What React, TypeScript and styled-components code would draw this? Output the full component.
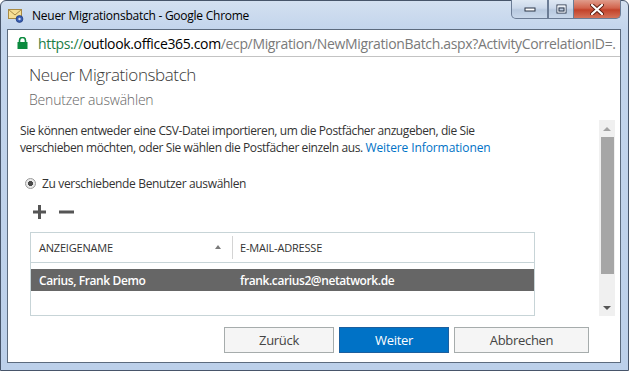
import styled, { createGlobalStyle } from 'styled-components'

const GlobalStyle = createGlobalStyle`
  html, body {
    margin: 0;
    padding: 0;
  }
  body {
    width: 629px;
    height: 371px;
    overflow: hidden;
    font-family: 'Segoe UI', 'Open Sans', sans-serif;
  }
`

const Window = styled.div`
  box-sizing: border-box;
  width: 629px;
  height: 371px;
  display: flex;
  flex-direction: column;
  padding: 0 7px 7px 6px;
  border: 1px solid #47556a;
  border-radius: 6px 6px 0 0;
  background: linear-gradient(180deg, #d3e0f0 0%, #c3d5ec 28px, #bcd0ea 100%);
`

const TitleBar = styled.div`
  height: 28px;
  display: flex;
  align-items: center;
  padding-left: 1px;
`

const TitleText = styled.span`
  margin-left: 8px;
  font-size: 12px;
  letter-spacing: -0.25px;
  color: #000;
  flex: 1;
`

const Controls = styled.div`
  align-self: flex-start;
  display: flex;
  margin-top: -1px;
  height: 19px;
`

const CtrlButton = styled.div<{ $width: number; $close?: boolean }>`
  box-sizing: border-box;
  width: ${(p) => p.$width}px;
  height: 19px;
  border: 1px solid #6b7c95;
  border-top: none;
  border-left-width: ${(p) => (p.$close ? 0 : 1)}px;
  display: flex;
  align-items: center;
  justify-content: center;
  background: ${(p) =>
    p.$close
      ? 'linear-gradient(180deg, #e09c8b 0%, #d2634c 45%, #c2422a 55%, #d5735a 100%)'
      : 'linear-gradient(180deg, #dfe8f3 0%, #cbd8ea 45%, #b8c9df 55%, #c8d7ea 100%)'};
  border-radius: ${(p) => (p.$close ? '0 0 5px 0' : '0')};
  &:first-child {
    border-radius: 0 0 0 5px;
  }
`

const Client = styled.div`
  flex: 1;
  display: flex;
  flex-direction: column;
  border: 1px solid #5c6b7e;
  background: #fff;
  min-height: 0;
`

const AddressBar = styled.div`
  height: 26px;
  display: flex;
  align-items: center;
  padding-left: 9px;
  border-bottom: 1px solid #c3c3c3;
  white-space: nowrap;
  overflow: hidden;
`

const Url = styled.span`
  margin-left: 10px;
  font-size: 14px;
  letter-spacing: -0.35px;
  color: #7a7a7a;
  overflow: hidden;
`

const Scheme = styled.span`
  color: #1b7d46;
`

const Host = styled.span`
  color: #000;
`

const Page = styled.div`
  flex: 1;
  display: flex;
  flex-direction: column;
  min-height: 0;
`

const Header = styled.div`
  height: 63px;
  box-sizing: border-box;
  padding: 6px 0 0 21px;
`

const Heading = styled.div`
  font-size: 17px;
  font-weight: 300;
  letter-spacing: -0.4px;
  color: #3a3a3a;
  line-height: 24px;
`

const SubHeading = styled.div`
  margin-top: 3px;
  font-size: 14px;
  font-weight: 300;
  letter-spacing: -0.2px;
  color: #666;
  line-height: 20px;
`

const Body = styled.div`
  height: 196px;
  display: flex;
  padding-right: 5px;
`

const Main = styled.div`
  flex: 1;
  padding: 2px 0 0 12px;
  color: #333;
  font-size: 12px;
  line-height: 17px;
`

const Intro = styled.p`
  margin: 0;
  letter-spacing: -0.4px;
`

const Link = styled.a`
  color: #0072c6;
  letter-spacing: -0.1px;
  text-decoration: none;
`

const RadioRow = styled.label`
  margin: 19px 0 0 5px;
  display: flex;
  align-items: center;
  gap: 6px;
  letter-spacing: -0.35px;
`

const Radio = styled.span`
  box-sizing: border-box;
  width: 11px;
  height: 11px;
  border-radius: 50%;
  border: 1px solid #9a9a9a;
  background: radial-gradient(circle, #4a4a4a 0 2.3px, #e8e8e8 2.8px);
`

const Toolbar = styled.div`
  margin: 11px 0 0 13px;
  display: flex;
  align-items: center;
  gap: 12px;
  height: 18px;
`

const Table = styled.div`
  margin: 11px 0 0 10px;
  width: 505px;
  height: 84px;
  box-sizing: border-box;
  border: 1px solid #c7d4d7;
`

const HeadRow = styled.div`
  display: flex;
  height: 29px;
  border-bottom: 1px solid #c7d4d7;
  font-size: 11px;
  color: #333;
  letter-spacing: -0.2px;
`

const HeadCell = styled.div<{ $width?: number }>`
  position: relative;
  ${(p) => (p.$width ? `width: ${p.$width}px;` : 'flex: 1;')}
  display: flex;
  align-items: center;
  padding-left: 8px;
  box-sizing: border-box;
  & + & {
    border-left: 1px solid #d4d4d4;
    margin: 3px 0;
    padding-left: 7px;
  }
`

const SortArrow = styled.span`
  position: absolute;
  right: 11px;
  top: 12px;
  width: 0;
  height: 0;
  border-left: 3px solid transparent;
  border-right: 3px solid transparent;
  border-bottom: 4px solid #7a7a7a;
`

const DataRow = styled.div<{ $selected?: boolean }>`
  margin-top: 6px;
  display: flex;
  height: 22px;
  align-items: center;
  font-size: 12px;
  font-weight: 600;
  letter-spacing: -0.4px;
  background: ${(p) => (p.$selected ? '#666' : 'transparent')};
  color: ${(p) => (p.$selected ? '#fff' : '#333')};
`

const DataCell = styled.div<{ $width?: number }>`
  ${(p) => (p.$width ? `width: ${p.$width}px;` : 'flex: 1;')}
  padding-left: 8px;
  box-sizing: border-box;
`

const ScrollBar = styled.div`
  width: 16px;
  height: 196px;
  display: flex;
  flex-direction: column;
  background: #f0f0f0;
`

const ScrollArrow = styled.div<{ $down?: boolean; $dim?: boolean }>`
  height: 17px;
  display: flex;
  align-items: center;
  justify-content: center;
  &::after {
    content: '';
    width: 0;
    height: 0;
    border-left: 4px solid transparent;
    border-right: 4px solid transparent;
    ${(p) =>
      p.$down
        ? `border-top: 4px solid ${p.$dim ? '#a3a3a3' : '#555'};`
        : `border-bottom: 4px solid ${p.$dim ? '#a3a3a3' : '#555'};`}
  }
`

const Thumb = styled.div`
  margin: 0 1px 0 2px;
  height: 137px;
  background: #a6a6a6;
`

const Track = styled.div`
  flex: 1;
`

const Footer = styled.div`
  margin-top: 11px;
  height: 26px;
  display: flex;
  justify-content: flex-end;
  gap: 5px;
  padding-right: 31px;
`

const Button = styled.button<{ $primary?: boolean; $width: number }>`
  width: ${(p) => p.$width}px;
  height: 26px;
  box-sizing: border-box;
  font-family: inherit;
  font-size: 13px;
  letter-spacing: -0.3px;
  border: 1px solid ${(p) => (p.$primary ? '#1c5f9e' : '#a6acac')};
  background: ${(p) => (p.$primary ? '#0072c6' : '#f5f5f5')};
  color: ${(p) => (p.$primary ? '#fff' : '#444')};
  padding: 0;
`

const MailIcon = () => (
  <svg width="16" height="16" viewBox="0 0 16 16">
    <rect x="0.5" y="2.5" width="13" height="9" fill="#f6df95" stroke="#a88a45" />
    <path d="M0.5 2.5 L7 8 L13.5 2.5" fill="none" stroke="#a88a45" />
    <circle cx="11.5" cy="12" r="3.4" fill="#3a5fb3" stroke="#1f3c80" strokeWidth="0.8" />
    <circle cx="11.5" cy="12" r="1.2" fill="#c9d8f5" />
  </svg>
)

const LockIcon = () => (
  <svg width="11" height="12" viewBox="0 0 11 12">
    <path d="M2.5 5.5 V3.5 A3 3 0 0 1 8.5 3.5 V5.5" fill="none" stroke="#0b8a3e" strokeWidth="1.6" />
    <rect x="0.5" y="5" width="10" height="7" fill="#0b8a3e" />
  </svg>
)

const MinGlyph = () => (
  <svg width="12" height="6" viewBox="0 0 12 6">
    <rect x="1" y="2" width="10" height="3" fill="#fff" stroke="#2a3446" />
  </svg>
)

const MaxGlyph = () => (
  <svg width="11" height="10" viewBox="0 0 11 10">
    <rect x="1" y="1" width="9" height="8" fill="none" stroke="#2a3446" strokeWidth="1" />
    <rect x="2" y="2" width="7" height="6" fill="none" stroke="#fff" strokeWidth="1" />
    <rect x="3" y="4" width="5" height="3" fill="none" stroke="#2a3446" strokeWidth="1" />
  </svg>
)

const CloseGlyph = () => (
  <svg width="14" height="11" viewBox="0 0 14 11">
    <path d="M2 1 L12 10 M12 1 L2 10" stroke="#5a1d12" strokeWidth="4" strokeLinecap="round" />
    <path d="M2 1 L12 10 M12 1 L2 10" stroke="#fff" strokeWidth="2.2" strokeLinecap="round" />
  </svg>
)

const PlusIcon = () => (
  <svg width="14" height="14" viewBox="0 0 14 14">
    <rect x="0" y="5.5" width="13" height="3" fill="#555" />
    <rect x="5" y="0" width="3" height="14" fill="#555" />
  </svg>
)

const MinusIcon = () => (
  <svg width="15" height="14" viewBox="0 0 15 14">
    <rect x="0" y="5.5" width="15" height="3" fill="#555" />
  </svg>
)

export default function App() {
  return (
    <>
      <GlobalStyle />
      <Window>
        <TitleBar>
          <MailIcon />
          <TitleText>Neuer Migrationsbatch - Google Chrome</TitleText>
          <Controls>
            <CtrlButton $width={37}>
              <MinGlyph />
            </CtrlButton>
            <CtrlButton $width={26}>
              <MaxGlyph />
            </CtrlButton>
            <CtrlButton $width={47} $close>
              <CloseGlyph />
            </CtrlButton>
          </Controls>
        </TitleBar>
        <Client>
          <AddressBar>
            <LockIcon />
            <Url>
              <Scheme>https://</Scheme>
              <Host>outlook.office365.com</Host>
              /ecp/Migration/NewMigrationBatch.aspx?ActivityCorrelationID=.
            </Url>
          </AddressBar>
          <Page>
            <Header>
              <Heading>Neuer Migrationsbatch</Heading>
              <SubHeading>Benutzer auswählen</SubHeading>
            </Header>
            <Body>
              <Main>
                <Intro>
                  Sie können entweder eine CSV-Datei importieren, um die Postfächer anzugeben, die Sie
                  <br />
                  verschieben möchten, oder Sie wählen die Postfächer einzeln aus.{' '}
                  <Link href="#">Weitere Informationen</Link>
                </Intro>
                <RadioRow>
                  <Radio />
                  Zu verschiebende Benutzer auswählen
                </RadioRow>
                <Toolbar>
                  <PlusIcon />
                  <MinusIcon />
                </Toolbar>
                <Table>
                  <HeadRow>
                    <HeadCell $width={201}>
                      ANZEIGENAME
                      <SortArrow />
                    </HeadCell>
                    <HeadCell>E-MAIL-ADRESSE</HeadCell>
                  </HeadRow>
                  <DataRow $selected>
                    <DataCell $width={201}>Carius, Frank Demo</DataCell>
                    <DataCell>frank.carius2@netatwork.de</DataCell>
                  </DataRow>
                </Table>
              </Main>
              <ScrollBar>
                <ScrollArrow $dim />
                <Thumb />
                <Track />
                <ScrollArrow $down />
              </ScrollBar>
            </Body>
            <Footer>
              <Button $width={110}>Zurück</Button>
              <Button $width={110} $primary>
                Weiter
              </Button>
              <Button $width={135}>Abbrechen</Button>
            </Footer>
          </Page>
        </Client>
      </Window>
    </>
  )
}
